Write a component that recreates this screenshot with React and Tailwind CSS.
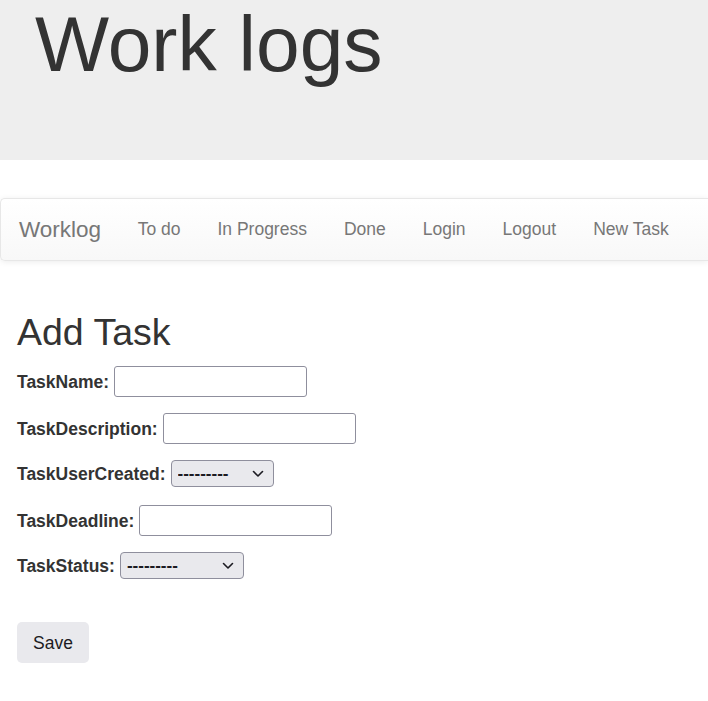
import { useState } from 'react';

const links = ['To do', 'In Progress', 'Done', 'Login', 'Logout', 'New Task'];

function Chevron() {
  return (
    <svg width="12" height="8" viewBox="0 0 12 8" className="absolute right-[10px] top-1/2 -translate-y-1/2 pointer-events-none">
      <path d="M1.5 1.5 L6 6 L10.5 1.5" fill="none" stroke="#1c1b22" strokeWidth="1.6" strokeLinecap="round" strokeLinejoin="round" />
    </svg>
  );
}

function Select({ width }) {
  return (
    <div className="relative inline-block">
      <select
        className={`appearance-none h-[27px] ${width} pl-[6px] pr-[24px] bg-[#e9e9ed] border border-[#8f8f9d] rounded-[4px] text-[17px] font-bold text-[#1c1b22] leading-none`}
      >
        <option>---------</option>
      </select>
      <Chevron />
    </div>
  );
}

export default function App() {
  const [form, setForm] = useState({ name: '', description: '', deadline: '' });

  const update = (key) => (e) => setForm({ ...form, [key]: e.target.value });

  const inputCls = 'h-[31px] w-[193px] border border-[#8f8f9d] rounded-[3px] bg-white px-[3px] text-[17.5px] outline-none';

  return (
    <div className="min-h-screen bg-white text-[#333] text-[17.5px] overflow-hidden" style={{ fontFamily: '"Liberation Sans", Arial, sans-serif' }}>
      {/* Jumbotron */}
      <div className="h-[160px] bg-[#eeeeee] pl-[35px]">
        <h1 className="text-[78.5px] leading-[1.1] font-normal text-[#333] m-0 pt-[1px]">Work logs</h1>
      </div>

      {/* Navbar */}
      <nav className="mt-[38px] h-[63px] flex items-center border border-r-0 border-[#e7e7e7] rounded-l-[5px] bg-gradient-to-b from-white to-[#f8f8f8] shadow-[0_1px_6px_rgba(0,0,0,0.08)]">
        <a className="pl-[18px] pr-[18px] text-[22.5px] text-[#777]">Worklog</a>
        <ul className="flex">
          {links.map((l) => (
            <li key={l}>
              <a className="block px-[18.5px] text-[17.5px] text-[#777]">{l}</a>
            </li>
          ))}
        </ul>
      </nav>

      {/* Form */}
      <main className="px-[17px]">
        <h2 className="mt-[51px] text-[37.5px] leading-[1.1] font-normal text-[#333]">Add Task</h2>
        <form className="mt-[13px]" onSubmit={(e) => e.preventDefault()}>
          <div className="flex items-center gap-[5px] mb-[16px]">
            <label className="font-bold">TaskName:</label>
            <input className={inputCls} value={form.name} onChange={update('name')} />
          </div>
          <div className="flex items-center gap-[5px] mb-[16px]">
            <label className="font-bold">TaskDescription:</label>
            <input className={inputCls} value={form.description} onChange={update('description')} />
          </div>
          <div className="flex items-center gap-[5px] mb-[18px]">
            <label className="font-bold">TaskUserCreated:</label>
            <Select width="w-[103px]" />
          </div>
          <div className="flex items-center gap-[5px] mb-[16px]">
            <label className="font-bold">TaskDeadline:</label>
            <input className={inputCls} value={form.deadline} onChange={update('deadline')} />
          </div>
          <div className="flex items-center gap-[5px]">
            <label className="font-bold">TaskStatus:</label>
            <Select width="w-[124px]" />
          </div>
          <button type="submit" className="mt-[43px] ml-0 w-[72px] h-[41px] bg-[#e9e9ed] rounded-[5px] text-[17.5px] text-[#1c1b22]">
            Save
          </button>
        </form>
      </main>
    </div>
  );
}
